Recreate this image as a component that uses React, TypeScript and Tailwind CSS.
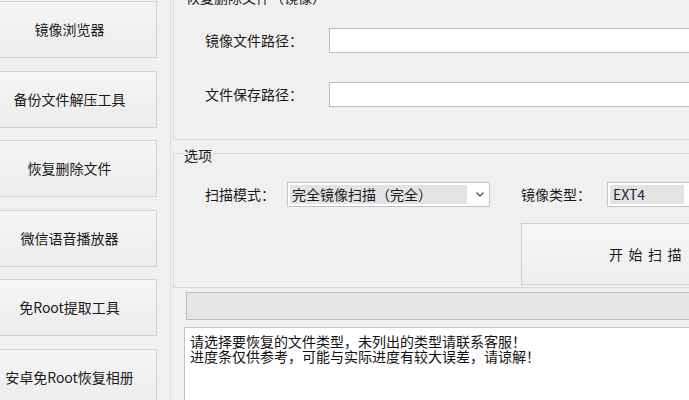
import React from "react";

const font = { fontFamily: '"Noto Sans CJK SC", "Noto Sans", sans-serif' };

function Chevron() {
  return (
    <svg width="10" height="7" viewBox="0 0 10 7" className="shrink-0">
      <path d="M1.5 1.5 L5 5 L8.5 1.5" fill="none" stroke="#555" strokeWidth="1.4" />
    </svg>
  );
}

function SideButton({ label }: { label: string }) {
  return (
    <div className="ml-[-18px] w-[175px] h-[57px] shrink-0 flex items-center justify-center border border-[#d2d2d2] bg-gradient-to-b from-[#f5f5f5] to-[#ececec] text-[14px] text-[#1a1a1a]">
      {label}
    </div>
  );
}

export default function App() {
  const buttons = ["镜像浏览器", "备份文件解压工具", "恢复删除文件", "微信语音播放器", "免Root提取工具", "安卓免Root恢复相册"];
  return (
    <div className="w-[689px] h-[400px] overflow-hidden bg-[#f0f0f0] flex" style={font}>
      <div className="w-[171px] shrink-0 border-r border-[#dedede] flex flex-col gap-[12.6px] pt-[1px]">
        {buttons.map((b) => (
          <SideButton key={b} label={b} />
        ))}
      </div>
      <div className="w-[620px] shrink-0 pl-[2px] flex flex-col">
        <div className="relative mt-[-3px] h-[143px] shrink-0 border border-[#d8d8d8] pl-[31px] flex flex-col">
          <span className="absolute top-[-11px] left-[11px] px-[1px] bg-[#f0f0f0] text-[14px] leading-[20px] text-[#1a1a1a]">恢复删除文件（镜像）</span>
          <div className="mt-[30px] h-[25px] shrink-0 flex items-center">
            <div className="w-[124px] text-[14px] text-[#1a1a1a]">镜像文件路径：</div>
            <div className="w-[420px] h-[25px] bg-white border border-[#bdbdbd]" />
          </div>
          <div className="mt-[29px] h-[25px] shrink-0 flex items-center">
            <div className="w-[124px] text-[14px] text-[#1a1a1a]">文件保存路径：</div>
            <div className="w-[420px] h-[25px] bg-white border border-[#bdbdbd]" />
          </div>
        </div>
        <div className="relative mt-[13px] h-[135px] shrink-0 border border-[#d8d8d8] flex flex-col">
          <span className="absolute top-[-9px] left-[9px] px-[1px] bg-[#f0f0f0] text-[14px] leading-[20px] text-[#1a1a1a]">选项</span>
          <div className="mt-[28px] h-[25px] shrink-0 flex items-center pl-[31px]">
            <div className="w-[82px] text-[14px] text-[#1a1a1a]">扫描模式：</div>
            <div className="w-[203px] h-[25px] bg-white border border-[#c4c4c4] flex items-center pl-[2px] pr-[4px] gap-[8px]">
              <div className="flex-1 h-[19px] bg-[#e3e3e3] text-[14px] leading-[19px] text-[#1a1a1a] pl-[2px]">完全镜像扫描（完全）</div>
              <Chevron />
            </div>
            <div className="ml-[31px] w-[86px] text-[14px] text-[#1a1a1a]">镜像类型：</div>
            <div className="w-[120px] h-[25px] bg-white border border-[#c4c4c4] flex items-center pl-[2px] pr-[4px] gap-[6px]">
              <div className="w-[74px] h-[19px] bg-[#e3e3e3] text-[14px] leading-[19px] text-[#2a2340] pl-[3px]">EXT4</div>
              <Chevron />
            </div>
          </div>
          <div className="mt-[16px] ml-[347px] w-[249px] h-[62px] shrink-0 border border-[#cfcfcf] bg-gradient-to-b from-[#f6f6f6] to-[#eeeeee] flex items-center justify-center pl-[5px] text-[14px] tracking-[5.5px] text-[#1a1a1a]">
            开始扫描
          </div>
        </div>
        <div className="mt-[4px] ml-[13px] w-[560px] h-[28px] shrink-0 bg-[#e6e6e6] border border-[#bcbcbc]" />
        <div className="mt-[7px] ml-[11px] w-[560px] h-[90px] shrink-0 bg-white border border-[#c2c2c2] pt-[6px] pl-[5px] text-[14px] leading-[15px] text-[#111]">
          <div>请选择要恢复的文件类型，未列出的类型请联系客服！</div>
          <div>进度条仅供参考，可能与实际进度有较大误差，请谅解！</div>
        </div>
      </div>
    </div>
  );
}
